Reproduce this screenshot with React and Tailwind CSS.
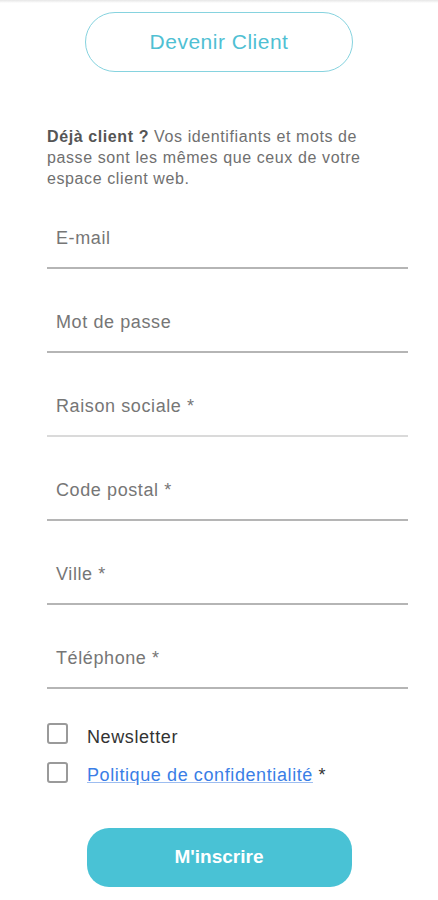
export default function App() {
  const fields = [
    { label: "E-mail", line: "border-[#b5b5b5]" },
    { label: "Mot de passe", line: "border-[#b5b5b5]" },
    { label: "Raison sociale *", line: "border-[#dadada]" },
    { label: "Code postal *", line: "border-[#b5b5b5]" },
    { label: "Ville *", line: "border-[#b5b5b5]" },
    { label: "Téléphone *", line: "border-[#b5b5b5]" },
  ];
  return (
    <div className="w-[438px] h-[900px] bg-white relative overflow-hidden" style={{ fontFamily: '"Liberation Sans", Arial, sans-serif' }}>
      <div className="absolute top-0 left-0 right-0 h-[3px] bg-gradient-to-b from-[#e6e6e6] to-white" />
      <div className="flex flex-col items-center pt-[12px]">
        <button className="w-[268px] h-[60px] rounded-full border border-[#86d3df] text-[#4fc0d3] text-[21px] tracking-[0.5px] bg-white">
          Devenir Client
        </button>
      </div>
      <p className="ml-[47px] w-[330px] mt-[54px] text-[16px] tracking-[0.6px] leading-[21px] text-[#707070]">
        <span className="font-bold text-[#555555]">Déjà client ?</span> Vos identifiants et mots de passe sont les mêmes que ceux de votre espace client web.
      </p>
      <div className="ml-[47px] w-[361px] -mt-[4px] flex flex-col">
        {fields.map((f) => (
          <div key={f.label} className={`h-[84px] border-b-2 ${f.line} flex items-end`}>
            <span className="pl-[9px] pb-[15px] text-[18px] tracking-[0.6px] text-[#767676]">{f.label}</span>
          </div>
        ))}
      </div>
      <div className="ml-[47px] mt-[33px] flex flex-col gap-[17px]">
        <div className="flex items-center h-[22px]">
          <span className="w-[21px] h-[21px] rounded-[3px] border-2 border-[#9a9a9a] bg-white" />
          <span className="ml-[19px] mt-[8px] text-[18px] tracking-[0.6px] text-[#333333]">Newsletter</span>
        </div>
        <div className="flex items-center h-[22px]">
          <span className="w-[21px] h-[21px] rounded-[3px] border-2 border-[#9a9a9a] bg-white" />
          <span className="ml-[19px] mt-[6px] text-[18px] tracking-[0.6px] text-[#333333]">
            <span className="text-[#3a7ee6] underline decoration-[#9dbdf0]">Politique de confidentialité</span> *
          </span>
        </div>
      </div>
      <div className="flex justify-center mt-[45px]">
        <button className="w-[265px] h-[59px] rounded-[22px] bg-[#49c2d5] text-white font-bold text-[19px]">
          M'inscrire
        </button>
      </div>
    </div>
  );
}
